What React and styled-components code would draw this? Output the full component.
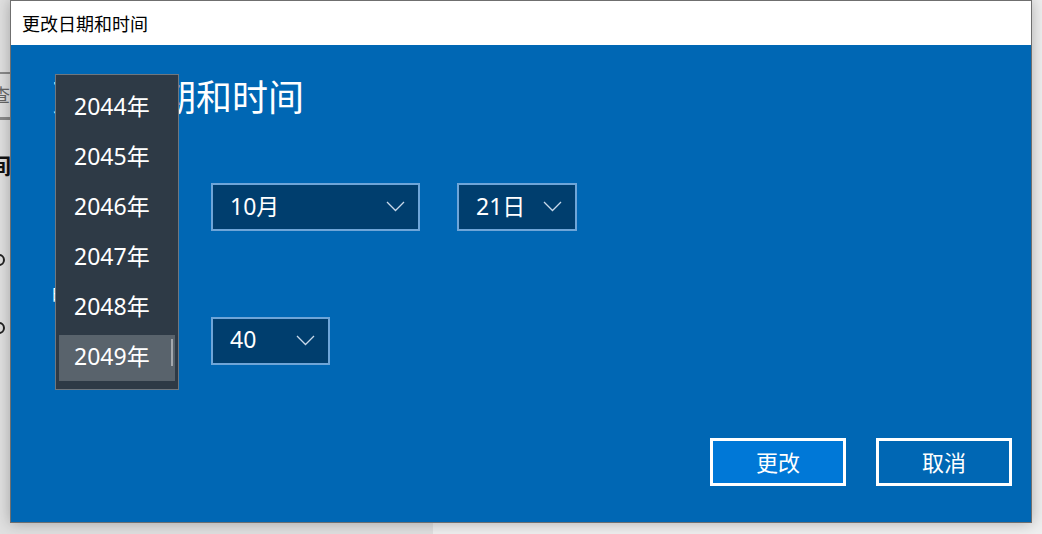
import React from 'react';
import styled, { createGlobalStyle } from 'styled-components';

const uiFont = `"Segoe UI", "Noto Sans", "Noto Sans CJK SC", sans-serif`;

const GlobalStyle = createGlobalStyle`
    html, body {
        margin: 0;
        padding: 0;
        overflow: hidden;
    }

    body {
        font-family: ${uiFont};
    }
`;

const Desktop = styled.div`
    position: relative;
    width: 1042px;
    height: 534px;
    display: flex;
    overflow: hidden;
    background: #efefef;
`;

const BackPanel = styled.div`
    width: 473px;
    height: 100%;
    flex: none;
    background: #e0e0e0;
    display: flex;
    flex-direction: column;
    margin-left: -40px;
    padding-top: 72px;
    box-sizing: border-box;
`;

const BackSearch = styled.div`
    width: 80px;
    height: 48px;
    box-sizing: border-box;
    border-top: 2px solid #8a8a8a;
    border-bottom: 3px solid #8a8a8a;
    font-family: "Noto Sans CJK SC", sans-serif;
    font-size: 18px;
    line-height: 40px;
    color: #666;
    padding-left: 32px;
`;

const BackHeading = styled.div`
    margin: 28px 0 0 7px;
    font-family: "Noto Sans CJK SC", sans-serif;
    font-size: 22px;
    font-weight: 700;
    color: #111;
`;

const BackDot = styled.div`
    margin-top: ${p => p.$top}px;
    margin-left: 33px;
    width: 8px;
    height: 8px;
    border-radius: 50%;
    border: 2px solid #222;
`;

const Window = styled.div`
    position: absolute;
    left: 10px;
    top: 0;
    width: 1022px;
    height: 523px;
    box-sizing: border-box;
    border: 1px solid #6f6f6f;
    background: #0067b4;
    display: flex;
    flex-direction: column;
    box-shadow: 0 0 14px rgba(0, 0, 0, 0.28);
`;

const TitleBar = styled.div`
    height: 44px;
    flex: none;
    background: #fff;
    display: flex;
    align-items: center;
    padding-left: 11px;
    font-family: "Noto Sans CJK SC", sans-serif;
    font-size: 18px;
    color: #000;
`;

const Body = styled.div`
    flex: 1;
    display: flex;
    flex-direction: column;
    padding: 26px 19px 36px 41px;
`;

const Heading = styled.h1`
    margin: 0;
    font-family: "Noto Sans CJK SC", sans-serif;
    font-weight: 400;
    font-size: 36px;
    line-height: 48px;
    color: #fff;
`;

const Row = styled.div`
    display: flex;
    gap: 37px;
    margin-top: ${p => p.$top}px;
`;

const Label = styled.div`
    margin-top: 52px;
    font-family: "Noto Sans CJK SC", sans-serif;
    font-size: 18px;
    line-height: 22px;
    color: #fff;
`;

const Combo = styled.div`
    width: ${p => p.$width}px;
    height: 48px;
    margin-left: ${p => p.$offset || 0}px;
    box-sizing: border-box;
    border: 2px solid #6ea5d8;
    background: #003e6e;
    display: flex;
    align-items: center;
    justify-content: space-between;
    padding: 0 13px 4px 17px;
    font-size: 23px;
    color: #fff;

    svg {
        margin-top: 3px;
    }
`;

const Chevron = () => (
    <svg width="19" height="11" viewBox="0 0 19 11" fill="none">
        <polyline points="1,1 9.5,9.5 18,1" stroke="#c9d9ea" strokeWidth="1.3" />
    </svg>
);

const Footer = styled.div`
    margin-top: auto;
    display: flex;
    justify-content: flex-end;
    gap: 30px;
`;

const Button = styled.button`
    width: 136px;
    height: 48px;
    box-sizing: border-box;
    border: 3px solid #fff;
    background: ${p => (p.$primary ? '#0078d7' : 'transparent')};
    color: #fff;
    font-family: "Noto Sans CJK SC", sans-serif;
    font-size: 22px;
    padding: 0 0 3px;
`;

const Popup = styled.div`
    position: absolute;
    left: 44px;
    top: 73px;
    width: 124px;
    height: 316px;
    box-sizing: border-box;
    border: 1px solid #6f777f;
    background: #2e3a46;
    padding: 10px 3px 8px;
    display: flex;
    flex-direction: column;
    gap: 4px;
`;

const PopupItem = styled.div`
    height: 46px;
    flex: none;
    box-sizing: border-box;
    display: flex;
    align-items: center;
    padding: 0 0 7px 15px;
    font-size: 23px;
    color: #fff;
    background: ${p => (p.$selected ? '#59636c' : 'transparent')};
`;

const ScrollThumb = styled.div`
    position: absolute;
    right: 5px;
    top: 264px;
    width: 2px;
    height: 27px;
    background: #a3a8ad;
`;

const years = [2044, 2045, 2046, 2047, 2048, 2049];

const App = () => (
    <Desktop>
        <GlobalStyle />
        <BackPanel>
            <BackSearch>查</BackSearch>
            <BackHeading>时间</BackHeading>
            <BackDot $top={74} />
            <BackDot $top={56} />
        </BackPanel>

        <Window>
            <TitleBar>更改日期和时间</TitleBar>
            <Body>
                <Heading>更改日期和时间</Heading>

                <Row $top={64}>
                    <Combo $width={118} $offset={4}>2049年<Chevron /></Combo>
                    <Combo $width={209}>10月<Chevron /></Combo>
                    <Combo $width={120}>21日<Chevron /></Combo>
                </Row>

                <Label>时间</Label>
                <Row $top={12}>
                    <Combo $width={118} $offset={4}>15<Chevron /></Combo>
                    <Combo $width={119}>40<Chevron /></Combo>
                </Row>

                <Footer>
                    <Button $primary>更改</Button>
                    <Button>取消</Button>
                </Footer>
            </Body>

            <Popup>
                {years.map(year => (
                    <PopupItem key={year} $selected={year === 2049}>{year}年</PopupItem>
                ))}
                <ScrollThumb />
            </Popup>
        </Window>
    </Desktop>
);

export default App;
